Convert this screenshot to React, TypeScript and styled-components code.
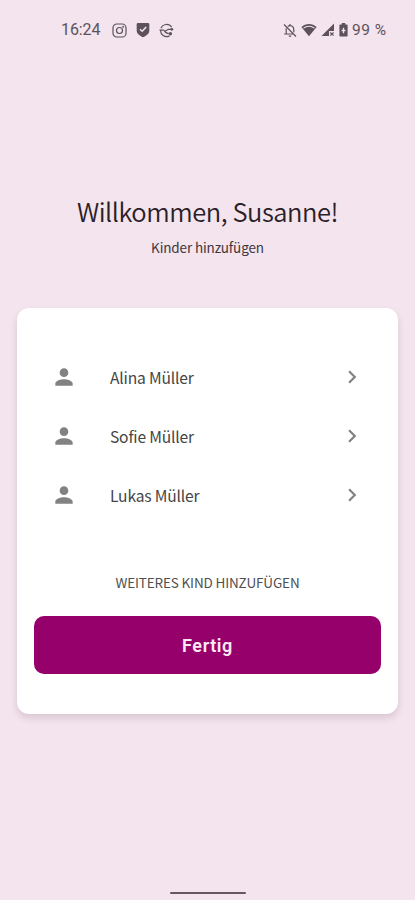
import React from "react";
import styled, { createGlobalStyle } from "styled-components";

const GlobalStyle = createGlobalStyle`
  * { box-sizing: border-box; }
  body { margin: 0; background: #f3e4ed; }
`;

const sourceFont = `"Noto Sans CJK SC", "Noto Sans", sans-serif`;

const Screen = styled.div`
  width: 415px;
  height: 900px;
  display: flex;
  flex-direction: column;
  background: #f3e4ed;
  font-family: ${sourceFont};
  overflow: hidden;
`;

const StatusBar = styled.header`
  height: 60px;
  padding: 0 27px 0 61px;
  display: flex;
  align-items: center;
  justify-content: space-between;
  color: #5d525b;
  font-family: Roboto, sans-serif;
  font-size: 16px;
  line-height: 20px;
`;

const StatusGroup = styled.div<{ $gap: number }>`
  display: flex;
  align-items: center;
  gap: ${(p) => p.$gap}px;
  svg { display: block; flex: none; }
`;

const Clock = styled.span`
  width: 42px;
  letter-spacing: -0.1px;
`;

const Percent = styled.span`
  width: 36px;
  font-size: 15.5px;
  letter-spacing: 0.5px;
  white-space: nowrap;
`;

const Intro = styled.section`
  height: 248px;
  padding-top: 131px;
  text-align: center;
  color: #2a2028;
`;

const Title = styled.h1`
  margin: 0;
  font-size: 25.5px;
  line-height: 40px;
  font-weight: 350;
  letter-spacing: -0.45px;
`;

const Subtitle = styled.p`
  margin: 5px 0 0;
  font-size: 13.5px;
  line-height: 22px;
  letter-spacing: -0.13px;
  color: #40373e;
`;

const Card = styled.main`
  width: 381px;
  height: 406px;
  margin-left: 17px;
  padding: 39px 17px 0;
  display: flex;
  flex-direction: column;
  align-items: stretch;
  background: #fff;
  border-radius: 12px;
  box-shadow: 0 4px 7px rgba(90, 50, 75, 0.16);
`;

const ChildList = styled.ul`
  list-style: none;
  margin: 0;
  padding: 0;
`;

const ChildRow = styled.li`
  height: 59px;
  padding: 0 15px 0 17px;
  display: grid;
  grid-template-columns: 59px 1fr 27px;
  align-items: center;
  color: #828282;
  svg { display: block; }
`;

const ChildName = styled.span`
  color: #454545;
  font-size: 15.6px;
  line-height: 24px;
  letter-spacing: -0.18px;
  padding-top: 1px;
`;

const AddButton = styled.button`
  height: 30px;
  margin-top: 43px;
  padding: 0;
  border: 0;
  background: none;
  color: #505050;
  font-family: ${sourceFont};
  font-size: 13.5px;
  letter-spacing: -0.15px;
  line-height: 30px;
`;

const DoneButton = styled.button`
  height: 58px;
  margin-top: 19px;
  padding: 1px 0 0;
  border: 0;
  border-radius: 10px;
  background: #96006b;
  color: #fbe9f5;
  font-family: Roboto, sans-serif;
  font-size: 18px;
  font-weight: 600;
  letter-spacing: 0.6px;
`;

const HomeHandle = styled.div`
  width: 76px;
  height: 2px;
  margin: auto auto 6.5px 170px;
  border-radius: 1px;
  background: #65565f;
`;

const CameraIcon = () => (
  <svg width="15" height="15" viewBox="0 0 15 15" fill="none" stroke="currentColor" strokeWidth="1.2">
    <rect x="1" y="1" width="13" height="13" rx="3.8" />
    <circle cx="7.5" cy="7.5" r="3" />
    <circle cx="11.2" cy="3.8" r=".4" />
  </svg>
);

const ShieldIcon = () => (
  <svg width="14" height="16" viewBox="0 0 14 16">
    <path d="M2 1h10q1.3 0 1.3 1.4v6.2c0 3.2-3 5.3-6.3 6.7C3.7 13.9.7 11.8.7 8.6V2.4Q.7 1 2 1z" fill="currentColor" />
    <path d="M4 7.2l2.2 2.1L10.2 5" fill="none" stroke="#f3e4ed" strokeWidth="1.5" />
  </svg>
);

const OrbitIcon = () => (
  <svg width="15" height="15" viewBox="0 0 15 15" fill="none" stroke="currentColor" strokeWidth="1.2">
    <path d="M12.6 4.2A6 6 0 0 0 2 5.2M1.6 7a6 6 0 0 0 8.8 5.9M.5 7.2h4.6M5.6 8.6L9.4 6.3h3.4" />
    <path d="M5.4 7.4c.4 2 2 3 4.4 2.9" />
    <circle cx="12.8" cy="6.3" r="1.4" fill="currentColor" stroke="none" />
    <circle cx="11.4" cy="10.7" r="1.7" fill="currentColor" stroke="none" />
  </svg>
);

const MutedBellIcon = () => (
  <svg width="14" height="15" viewBox="0 0 14 15" fill="none" stroke="currentColor" strokeWidth="1.2">
    <path d="M1 1.5l12 12M3.2 5.2v5.6M1.2 11h9.4M4.7 3.4C7.8 1.4 10.8 3.5 10.8 6.5v2.8M7 1v1.8" />
    <path d="M5.6 12.6h2.8a1.4 1.4 0 0 1-2.8 0z" fill="currentColor" stroke="none" />
  </svg>
);

const WifiIcon = () => (
  <svg width="16" height="14" viewBox="0 0 16 14">
    <path d="M.4 4C4.5.1 11.5.1 15.6 4L8 13.2z" fill="currentColor" />
    <path d="M2.6 5.1C5.7 2.7 10.3 2.7 13.4 5.1" fill="none" stroke="#f3e4ed" strokeWidth="1.1" />
  </svg>
);

const SignalIcon = () => (
  <svg width="14" height="14" viewBox="0 0 14 14" fill="currentColor">
    <path d="M13 .5V8H8v5H.5z" />
    <path d="M9.2 9.5l3.4 3.2m0-3.2l-3.4 3.2" stroke="currentColor" strokeWidth="1.1" />
  </svg>
);

const BatteryIcon = () => (
  <svg width="9" height="14" viewBox="0 0 9 14">
    <path d="M2.8 0h3.4v1.4h1.6q.8 0 .8.8v10.5q0 .8-.8.8H1.2q-.8 0-.8-.8V2.2q0-.8.8-.8h1.6z" fill="currentColor" />
    <path d="M4.5 4.7v5.6M2.6 7.5h3.8" stroke="#f3e4ed" strokeWidth="1.3" />
  </svg>
);

const PersonIcon = () => (
  <svg width="26" height="26" viewBox="0 0 24 24" fill="currentColor">
    <path d="M12 12c2.21 0 4-1.79 4-4s-1.79-4-4-4-4 1.79-4 4 1.79 4 4 4zm0 2c-2.67 0-8 1.34-8 4v2h16v-2c0-2.66-5.33-4-8-4z" />
  </svg>
);

const ChevronIcon = () => (
  <svg width="26" height="26" viewBox="0 0 24 24" fill="currentColor">
    <path d="M10 6L8.59 7.41 13.17 12l-4.58 4.59L10 18l6-6z" />
  </svg>
);

const children = ["Alina Müller", "Sofie Müller", "Lukas Müller"];

export default function App() {
  return (
    <>
      <GlobalStyle />
      <Screen>
        <StatusBar>
          <StatusGroup $gap={9}>
            <Clock>16:24</Clock>
            <CameraIcon />
            <ShieldIcon />
            <OrbitIcon />
          </StatusGroup>
          <StatusGroup $gap={4}>
            <MutedBellIcon />
            <WifiIcon />
            <SignalIcon />
            <BatteryIcon />
            <Percent>99 %</Percent>
          </StatusGroup>
        </StatusBar>
        <Intro>
          <Title>Willkommen, Susanne!</Title>
          <Subtitle>Kinder hinzufügen</Subtitle>
        </Intro>
        <Card>
          <ChildList>
            {children.map((name) => (
              <ChildRow key={name}>
                <PersonIcon />
                <ChildName>{name}</ChildName>
                <ChevronIcon />
              </ChildRow>
            ))}
          </ChildList>
          <AddButton>WEITERES KIND HINZUFÜGEN</AddButton>
          <DoneButton>Fertig</DoneButton>
        </Card>
        <HomeHandle />
      </Screen>
    </>
  );
}
